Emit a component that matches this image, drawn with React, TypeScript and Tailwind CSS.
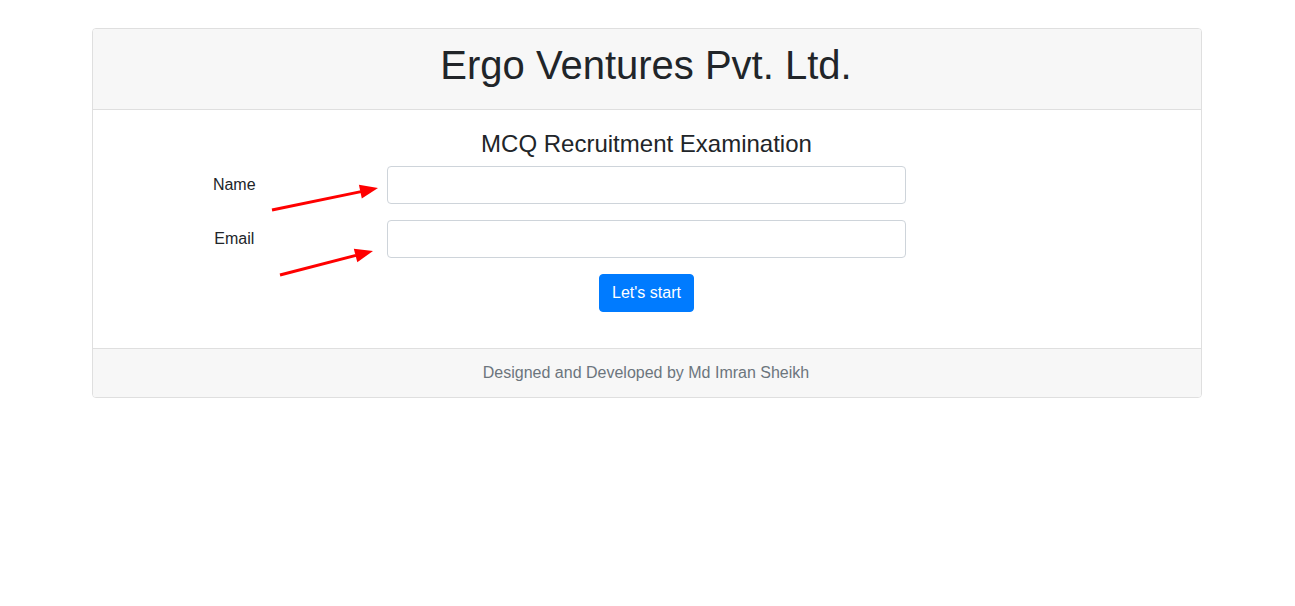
export default function App() {
  return (
    <div
      className="relative min-h-[606px] bg-white pt-[28px] text-[#212529]"
      style={{ fontFamily: '"Liberation Sans", Arial, sans-serif' }}
    >
      <div className="ml-[92px] w-[1110px] rounded-[4px] border border-[#dfdfdf]">
        {/* header */}
        <div className="rounded-t-[3px] border-b border-[#dfdfdf] bg-[#f7f7f7] pt-3 pr-[21px] pb-3 pl-[19px] text-center">
          <h1 className="mb-2 text-[40px] leading-[48px]">Ergo Ventures Pvt. Ltd.</h1>
        </div>

        {/* body */}
        <div className="pt-5 pr-[21px] pb-5 pl-[19px]">
          <h4 className="mr-[-1px] mb-2 text-center text-[24px] leading-[28px]">MCQ Recruitment Examination</h4>
          <form>
            <div className="mx-[-15px] mb-4 flex">
              <label className="w-3/12 px-[15px] pt-[7px] pb-[7px] text-center text-[16px] leading-6">Name</label>
              <div className="w-6/12 px-[15px]">
                <input
                  type="text"
                  className="block h-[38px] w-full rounded-[4px] border border-[#ced4da] px-3 text-[16px] outline-none"
                />
              </div>
            </div>
            <div className="mx-[-15px] mb-4 flex">
              <label className="w-3/12 px-[15px] pt-[7px] pb-[7px] text-center text-[16px] leading-6">Email</label>
              <div className="w-6/12 px-[15px]">
                <input
                  type="email"
                  className="block h-[38px] w-full rounded-[4px] border border-[#ced4da] px-3 text-[16px] outline-none"
                />
              </div>
            </div>
            <div className="mr-[-1px] mb-4 text-center">
              <button
                type="button"
                className="h-[38px] rounded-[4px] border border-[#007bff] bg-[#007bff] px-3 text-[16px] leading-6 text-white"
              >
                Let's start
              </button>
            </div>
          </form>
        </div>

        {/* footer */}
        <div className="rounded-b-[3px] border-t border-[#dfdfdf] bg-[#f7f7f7] py-3 pr-[21px] pl-[19px] text-center text-[16px] leading-6 text-[#6c757d]">
          Designed and Developed by Md Imran Sheikh
        </div>
      </div>

      {/* annotation arrows drawn over the form */}
      <svg className="pointer-events-none absolute top-0 left-0" width="1295" height="606">
        <line x1="272" y1="210" x2="361" y2="191.6" stroke="#ff0000" strokeWidth="3" />
        <polygon points="378,188 361.8,198.5 358.9,184.8" fill="#ff0000" />
        <line x1="280" y1="275" x2="356" y2="255.4" stroke="#ff0000" strokeWidth="3" />
        <polygon points="373,251 357.3,262.2 353.8,248.7" fill="#ff0000" />
      </svg>
    </div>
  );
}
